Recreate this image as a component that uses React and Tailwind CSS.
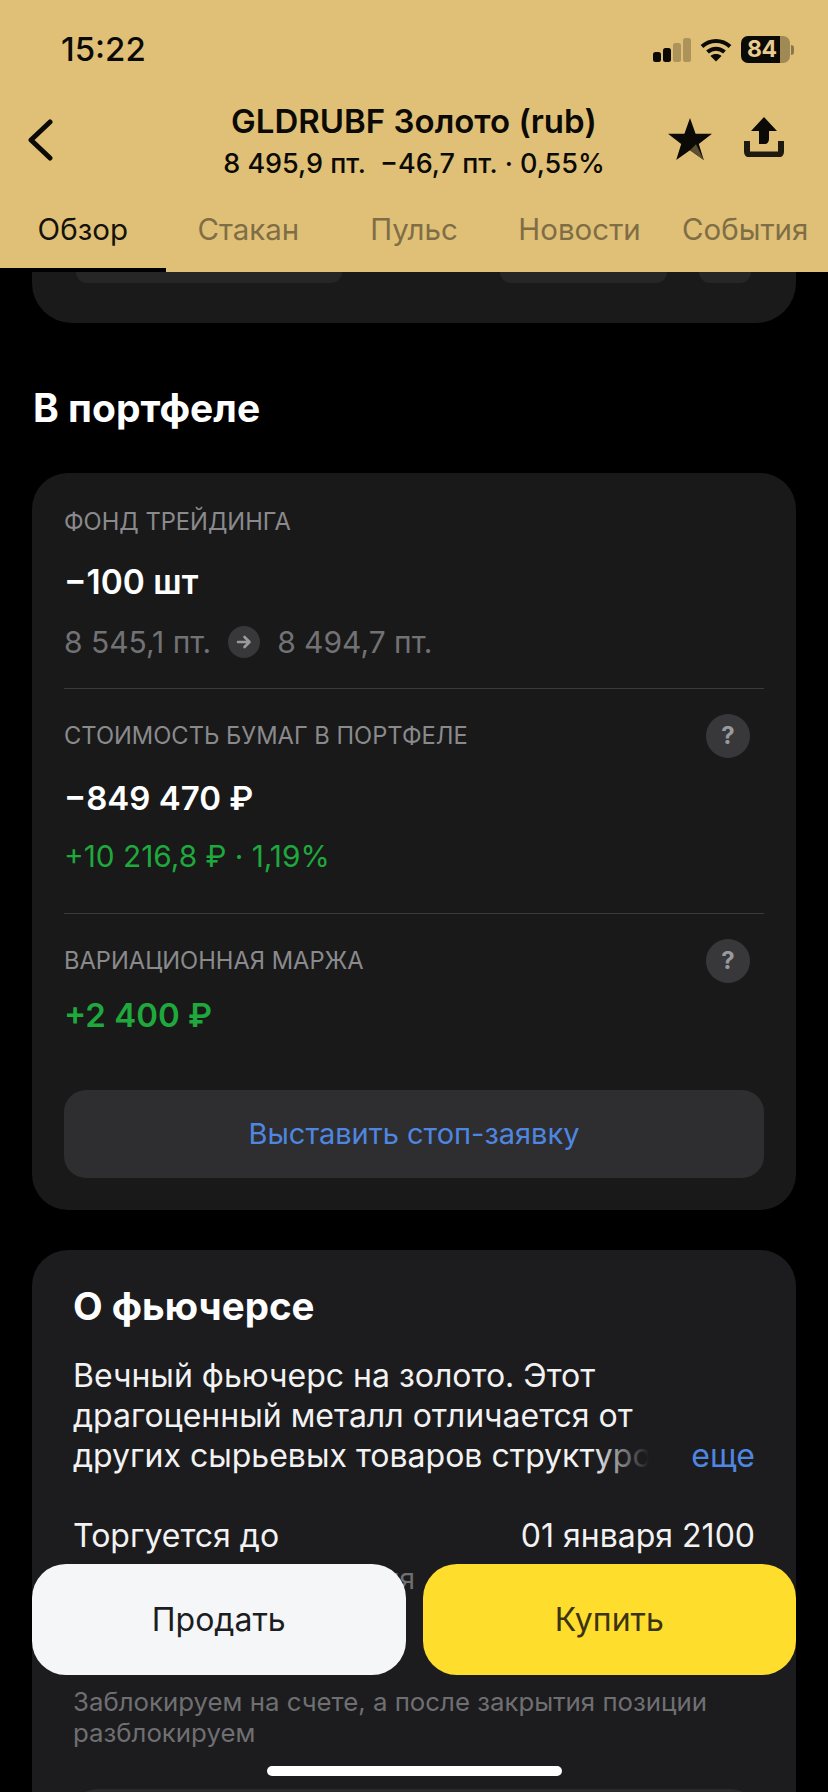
import React from "react";

const Q = () => (
  <div className="flex h-[44px] w-[44px] items-center justify-center rounded-full bg-[#38383a] text-[24px] font-bold leading-none text-[#9a9a9c]">?</div>
);

const Tab = ({ children, active }) => (
  <div className={`relative flex h-full flex-1 items-start justify-center pt-[13px] text-[29.5px] leading-[36px] ${active ? "text-[#14120c]" : "text-[#7f6e45]"}`}>
    {children}
    {active && <div className="absolute inset-x-0 bottom-0 h-[4px] bg-black" />}
  </div>
);

const Divider = () => <div className="h-px bg-[#3a3a3b]" />;

export default function App() {
  return (
    <div className="relative h-[1792px] w-[828px] overflow-hidden bg-black font-[Inter,sans-serif] text-white">
      <header className="h-[272px] bg-[#e0c076] text-[#0b0a07]">
        <div className="flex h-[98px] items-start justify-between pl-[61px] pr-[34px] pt-[30px]">
          <div className="text-[33px] font-medium leading-[38px]">15:22</div>
          <div className="flex items-center gap-[9px] pt-[6px]">
            <svg width="38" height="24" viewBox="0 0 38 24">
              <rect x="0" y="14" width="8" height="10" rx="2.5" fill="#0b0a07" />
              <rect x="10" y="10" width="8" height="14" rx="2.5" fill="#0b0a07" />
              <rect x="20" y="5" width="8" height="19" rx="2.5" fill="#0b0a07" opacity=".25" />
              <rect x="30" y="0" width="8" height="24" rx="2.5" fill="#0b0a07" opacity=".25" />
            </svg>
            <svg width="32" height="24" viewBox="0 0 32 24" fill="none" stroke="#0b0a07" strokeWidth="4">
              <path d="M2 8.5C10 1 22 1 30 8.5" />
              <path d="M7.5 14C12.5 9.5 19.5 9.500 24.5 14" />
              <path d="M16 23.5l-5.5-5.5c3-2.6 8-2.6 11 0z" fill="#0b0a07" stroke="none" />
            </svg>
            <div className="relative flex h-[27px] w-[49px] overflow-hidden rounded-[7px]">
              <div className="w-[39px] bg-[#0b0a07]" />
              <div className="flex-1 bg-[#0b0a07] opacity-30" />
              <div className="absolute inset-y-0 left-[6px] text-[23px] font-bold leading-[27px] tracking-[-0.5px] text-[#e8cd8e]">84</div>
            </div>
            <div className="-ml-[8px] h-[10px] w-[3px] rounded-r-full bg-[#0b0a07] opacity-40" />
          </div>
        </div>
        <div className="flex h-[100px] items-start justify-between">
          <div className="flex w-[200px] justify-start pl-[27px] pt-[21px]">
            <svg width="26" height="42" viewBox="0 0 26 42" fill="none" stroke="#0b0a07" strokeWidth="5" strokeLinecap="round" strokeLinejoin="round">
              <path d="M23 3L4 21l19 18" />
            </svg>
          </div>
          <div className="flex flex-col items-center whitespace-nowrap pt-[4px]">
            <div className="text-[33px] font-semibold leading-[38px] text-[#0b0a07]">GLDRUBF Золото (rub)</div>
            <div className="mt-[8px] whitespace-pre text-[27px] font-medium leading-[32px]">8 495,9 пт.  −46,7 пт. · 0,55%</div>
          </div>
          <div className="flex w-[200px] items-start justify-end gap-[32px] pr-[44px] pt-[20px]">
            <svg width="44" height="42" viewBox="0 0 44 42">
              <path d="M22 0l5.6 15.8H44L30.8 25.9 35.8 42 22 32.2 8.2 42l5-16.1L0 15.8h16.4z" fill="#0b0a07" />
              <path d="M22 32.2l6-6 7.8 15.8z" fill="#5d5030" />
            </svg>
            <svg width="40" height="40" viewBox="0 0 40 40" className="-mt-px">
              <path d="M20 0l13 14h-8v8c0 3-2 5-4 5h-6V14H7z" fill="#0b0a07" />
              <path d="M3 24v11c0 1.500 1 2.500 2.500 2.500h29c1.500 0 2.500-1 2.500-2.500V24" fill="none" stroke="#1f1a10" strokeWidth="6" />
            </svg>
          </div>
        </div>
        <nav className="flex h-[74px]">
          <Tab active>Обзор</Tab>
          <Tab>Стакан</Tab>
          <Tab>Пульс</Tab>
          <Tab>Новости</Tab>
          <Tab>События</Tab>
        </nav>
      </header>

      <main className="px-[32px]">
        <section className="flex h-[51px] items-start rounded-b-[40px] bg-[#1a1a1b] pl-[44px] pr-[38px]">
          <div className="h-[11px] w-[266px] rounded-b-[30px] bg-[#262627]" />
          <div className="ml-[158px] h-[11px] w-[167px] rounded-b-[30px] bg-[#262627]" />
          <div className="ml-[32px] h-[11px] w-[52px] rounded-b-[30px] bg-[#262627]" />
        </section>

        <h2 className="mt-[61px] pl-[1px] text-[39px] font-bold leading-[48px]">В портфеле</h2>

        <section className="mt-[41px] h-[737px] rounded-[36px] bg-[#19191a] px-[32px]">
          <div className="pt-[33px] text-[23.7px] leading-[32px] text-[#8a8a8c]">ФОНД ТРЕЙДИНГА</div>
          <div className="mt-[24px] text-[33.5px] font-semibold leading-[40px]">−100 шт</div>
          <div className="mt-[21px] flex items-center text-[30px] leading-[38px] text-[#727275]">
            <span>8 545,1 пт.</span>
            <span className="ml-[17px] flex h-[32px] w-[32px] shrink-0 items-center justify-center rounded-full bg-[#38383a]">
              <svg width="16" height="14" viewBox="0 0 16 14" fill="none" stroke="#9a9a9c" strokeWidth="2.6" strokeLinecap="round" strokeLinejoin="round">
                <path d="M2 7h11M8.500 2l5 5-5 5" />
              </svg>
            </span>
            <span className="ml-[17px]">8 494,7 пт.</span>
          </div>
          <div className="mt-[27px]"><Divider /></div>
          <div className="mt-[25px] flex items-center justify-between pr-[14px]">
            <div className="text-[23.7px] leading-[32px] text-[#8a8a8c]">СТОИМОСТЬ БУМАГ В ПОРТФЕЛЕ</div>
            <Q />
          </div>
          <div className="mt-[20px] text-[33px] font-semibold leading-[40px]">−849 470 ₽</div>
          <div className="mt-[19px] text-[29.8px] leading-[38px] text-[#1fa83c]">+10 216,8 ₽ · 1,19%</div>
          <div className="mt-[38px]"><Divider /></div>
          <div className="mt-[25px] flex items-center justify-between pr-[14px]">
            <div className="text-[23.7px] leading-[32px] text-[#8a8a8c]">ВАРИАЦИОННАЯ МАРЖА</div>
            <Q />
          </div>
          <div className="mt-[12px] text-[33px] font-semibold leading-[40px] text-[#1fa83c]">+2 400 ₽</div>
          <div className="mt-[55px] flex h-[88px] items-center justify-center rounded-[22px] bg-[#2e2e30] text-[29px] text-[#4f86e0]">Выставить стоп-заявку</div>
        </section>

        <section className="mt-[40px] h-[600px] rounded-t-[36px] bg-[#1c1c1e] px-[41px]">
          <h3 className="pt-[34px] text-[38.500px] font-bold leading-[44px]">О фьючерсе</h3>
          <div className="relative mt-[28px] text-[32px] leading-[40px] text-[#f2f2f3]">
            <div>Вечный фьючерс на золото. Этот</div>
            <div>драгоценный металл отличается от</div>
            <div className="flex justify-between">
              <div className="relative w-[590px] whitespace-nowrap">
                других сырьевых товаров структуро
                <div className="absolute inset-y-0 right-0 w-[70px] bg-gradient-to-r from-transparent to-[#1c1c1e] to-80%" />
              </div>
              <span className="text-[#4f86e0]">еще</span>
            </div>
          </div>
          <div className="mt-[40px] flex justify-between text-[32px] leading-[40px] text-[#f2f2f3]">
            <span>Торгуется до</span>
            <span>01 января 2100</span>
          </div>
          <div className="mt-[6px] w-[342px] whitespace-nowrap text-right text-[28px] leading-[34px] text-[#6f6f72]">для открытия</div>
          <div className="mt-[90px] text-[25.8px] leading-[31px] text-[#6f6f72]">
            Заблокируем на счете, а после закрытия позиции разблокируем
          </div>
          <div className="mt-[41px] h-[60px] rounded-t-[24px] bg-[#2a2a2c]" />
        </section>
      </main>

      <div className="absolute inset-x-[32px] top-[1564px] flex gap-[17px]">
        <button className="flex h-[111px] flex-1 items-center justify-center rounded-[34px] bg-[#f5f6f8] text-[32px] text-[#1c1d22]">Продать</button>
        <button className="flex h-[111px] flex-1 items-center justify-center rounded-[34px] bg-[#ffdd2d] text-[32px] text-[#3a3414]">Купить</button>
      </div>
      <div className="absolute left-[267px] top-[1766px] h-[10px] w-[295px] rounded-full bg-white" />
    </div>
  );
}
